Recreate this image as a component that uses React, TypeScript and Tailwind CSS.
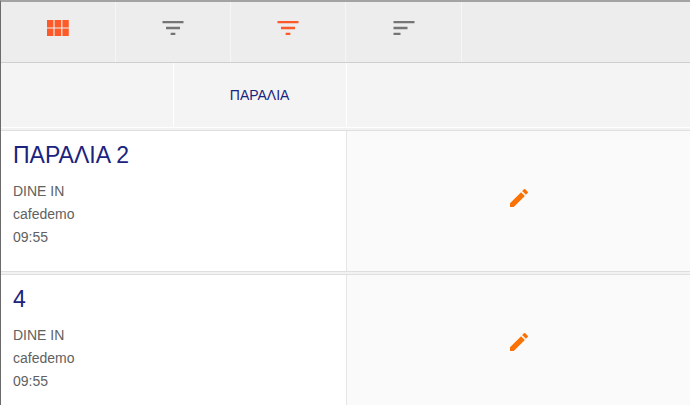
import clsx from 'clsx'
import { MdEdit, MdFilterList, MdSort } from 'react-icons/md'

const orders = [
  { table: 'ΠΑΡΑΛΙΑ 2', type: 'DINE IN', user: 'cafedemo', time: '09:55' },
  { table: '4', type: 'DINE IN', user: 'cafedemo', time: '09:55' },
]

function GridIcon() {
  return (
    <svg viewBox="0 0 22 16" className="h-4 w-[22px]" fill="currentColor">
      <path d="M0 0h6.4v7.2H0zM7.6 0h6.6v7.2H7.6zM15.4 0h6.4v7.2h-6.4zM0 8.8h6.4V16H0zM7.6 8.8h6.6V16H7.6zM15.4 8.8h6.4V16h-6.4z" />
      <path d="M0 7h6.4v2H0zM7.6 7h6.6v2H7.6zM15.4 7h6.4v2h-6.4z" opacity="0.3" />
    </svg>
  )
}

const tools = [
  { label: 'Grid view', icon: <GridIcon />, active: true },
  { label: 'Filter', icon: <MdFilterList className="size-7" />, active: false },
  { label: 'Active filter', icon: <MdFilterList className="size-7" />, active: true },
  { label: 'Sort', icon: <MdSort className="size-7" />, active: false },
]

function Toolbar() {
  return (
    <div className="grid grid-cols-6 border-b border-[#cfcfcf] bg-[#ededed]">
      {tools.map((tool) => (
        <button
          key={tool.label}
          type="button"
          aria-label={tool.label}
          className={clsx(
            'flex h-15 items-center justify-center border-r border-[#f6f6f6] pb-2',
            tool.active ? 'text-[#fc5a28]' : 'text-[#757575]'
          )}
        >
          {tool.icon}
        </button>
      ))}
    </div>
  )
}

function Areas() {
  return (
    <div className="grid grid-cols-4 border-b border-white bg-[#f4f4f4]">
      <div className="border-r border-white" />
      <button
        type="button"
        className="h-16 border-r border-white text-sm text-[#1a237e]"
      >
        ΠΑΡΑΛΙΑ
      </button>
    </div>
  )
}

export default function App() {
  return (
    <main className="min-h-screen overflow-hidden border-t-2 border-l border-t-[#a3a3a3] border-l-[#6b6b6b] bg-[#f2f2f2] font-['Liberation_Sans',Arial,sans-serif]">
      <div className="-mr-0.5">
        <Toolbar />
        <Areas />
        <ul className="mt-0.5 space-y-0.5">
          {orders.map((order) => (
            <li
              key={order.table}
              className="grid grid-cols-2 border-y border-[#dfdfdf] bg-[#fafafa]"
            >
              <div className="h-[140px] border-r border-[#e6e6e6] bg-white px-3 pt-2">
                <h2 className="mb-2 text-[23px] leading-[33px] text-[#1a237e]">
                  {order.table}
                </h2>
                <div className="text-sm leading-[23px] text-[#616161]">
                  <p>{order.type}</p>
                  <p>{order.user}</p>
                  <p>{order.time}</p>
                </div>
              </div>
              <button
                type="button"
                aria-label={`Edit ${order.table}`}
                className="flex items-center justify-center pb-1.5 text-[#fb7204]"
              >
                <MdEdit className="size-6" />
              </button>
            </li>
          ))}
        </ul>
      </div>
    </main>
  )
}
